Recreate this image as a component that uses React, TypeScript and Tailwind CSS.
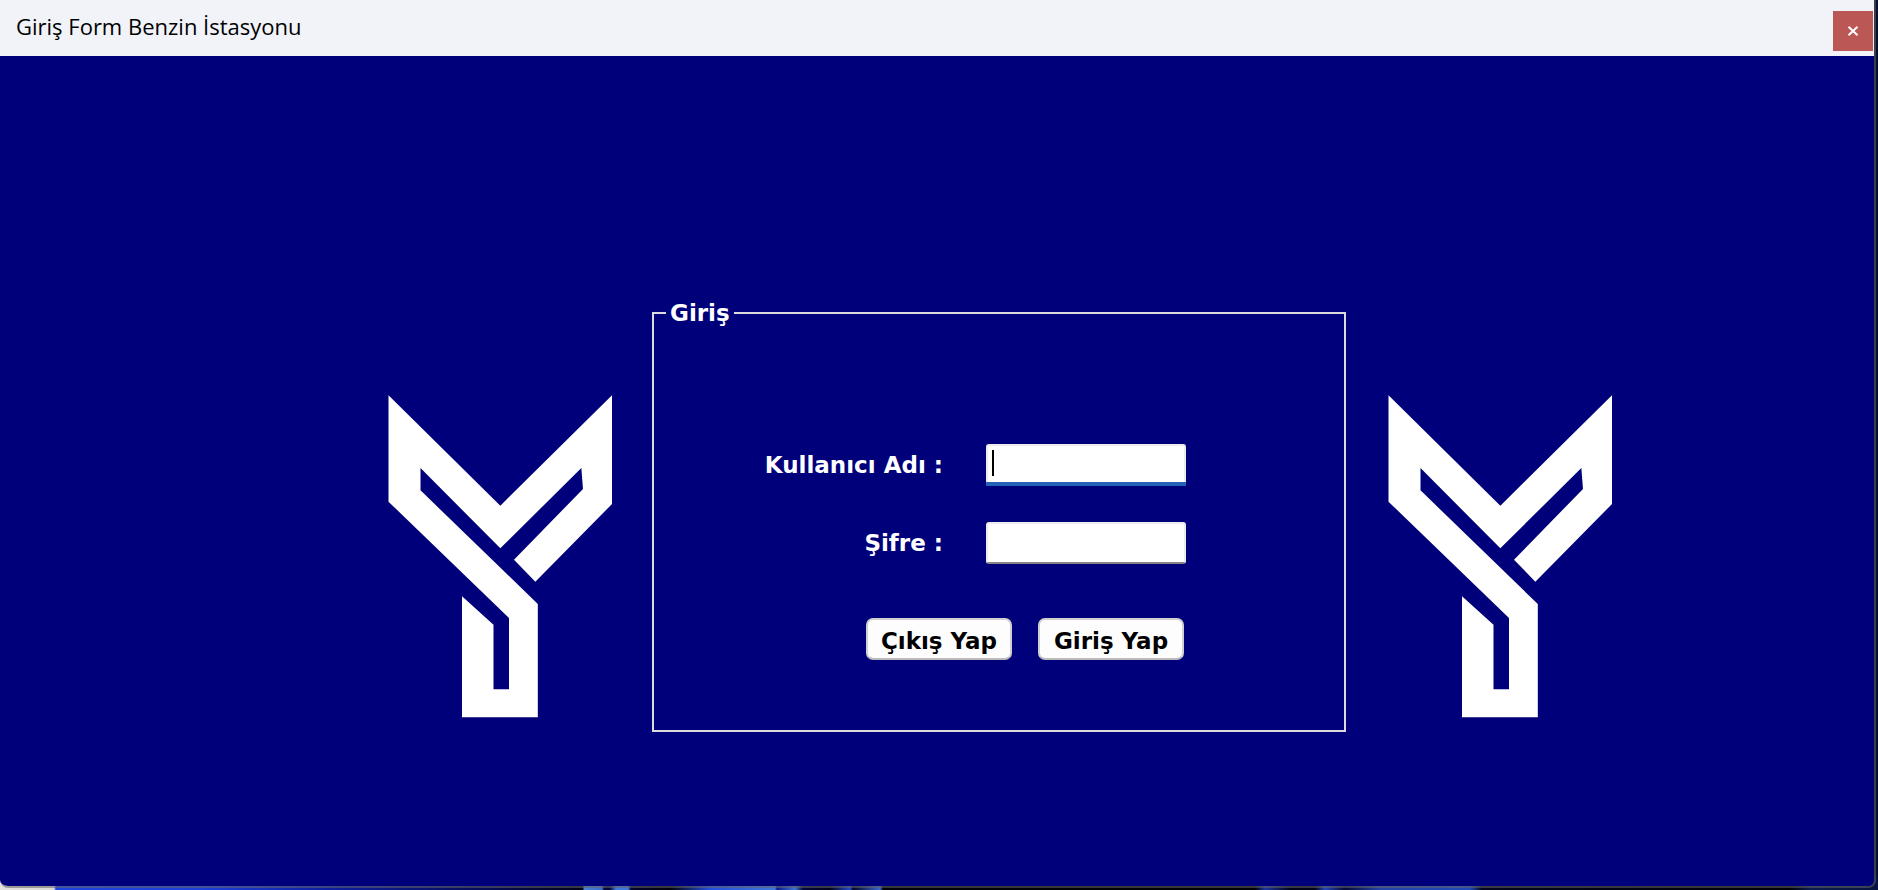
import type { ReactNode } from "react";

function YLogo() {
  return (
    <svg
      viewBox="54 45 672 969"
      className="mt-[94px] h-[323px] w-[224px] shrink-0 fill-white"
      role="img"
      aria-label="Logo"
    >
      <path d="M55.5 46 L391 377 L726 46 V372 L496 605 L432 539 L639 327 L634 264 L391 505 L151.5 264 V331 L503.4 672 V1011.5 H276 V649 L370.5 734 V928 H417 V714 L55.5 365 Z" />
    </svg>
  );
}

type FieldProps = { id: string; label: string; type: string; children?: ReactNode };

function Field({ id, label, type, children }: FieldProps) {
  return (
    <div className="flex items-center justify-end gap-[43px]">
      <label htmlFor={id} className="leading-6">
        {label}
      </label>
      <div className="relative h-[42px] w-[200px]">
        <input
          id={id}
          type={type}
          className="block size-full rounded-[3px] border-2 border-[#ececec] border-b-[#868686] bg-white px-1 text-black caret-transparent outline-none"
        />
        {children}
      </div>
    </div>
  );
}

function FormButton({ type, children }: { type: "button" | "submit"; children: ReactNode }) {
  return (
    <button
      type={type}
      className="h-[42px] w-[146px] rounded-[7px] border-2 border-[#d0d0d0] border-b-[#bababa] bg-[#fdfdfd] pt-1 text-center leading-6 whitespace-nowrap text-black"
    >
      {children}
    </button>
  );
}

export default function App() {
  return (
    <div className="flex min-h-screen flex-col bg-[#07102e] bg-[linear-gradient(90deg,#e4e2de_0px,#dcdad6_54px,#1d44e0_56px,#1d40dc_200px,#0d1ea0_330px,#050a50_500px,#020318_583px,#4a80d4_584px,#3a70cc_602px,#04083a_604px,#04083a_610px,#3f78d8_616px,#3f78d8_628px,#03052e_631px,#02020c_670px,#2450e0_710px,#3f78d8_775px,#0a1a90_777px,#3f74d0_795px,#04083a_803px,#02041c_830px,#2448c8_850px,#04062a_853px,#3a68cc_880px,#02020a_883px,#010108_1255px,#1c34a0_1265px,#02041c_1290px,#02041c_1315px,#2444b8_1325px,#050a38_1345px,#2444a8_1380px,#1f4ab8_1470px,#03061e_1482px,#010108_1790px,#0a1c50_1810px,#081440_100%)] bg-[length:100%_14px] bg-bottom bg-no-repeat pr-0.5 pb-0.5">
      <div className="flex grow flex-col overflow-hidden rounded-b-lg border-r-2 border-b-2 border-[#6464648c]">
        <header className="flex h-14 shrink-0 items-center justify-between bg-[#f1f3f9] pr-px pl-4">
          <h1 className="pb-1 font-['Open_Sans',sans-serif] text-[22px] leading-8 text-black">
            Giriş Form Benzin İstasyonu
          </h1>
          <button
            type="button"
            aria-label="Kapat"
            className="mt-1.5 flex size-10 items-center justify-center bg-[#bb5855]"
          >
            <svg viewBox="0 0 12 10" className="h-[10px] w-3" fill="none" stroke="white" strokeWidth="2">
              <path d="M1.5 0.8 L10.5 9.2 M10.5 0.8 L1.5 9.2" />
            </svg>
          </button>
        </header>

        <main className="flex grow items-start justify-center gap-10 bg-[#00007b] pt-[245px] pl-[126px] font-['DejaVu_Sans',Verdana,sans-serif] text-[23px] font-bold text-white">
          <YLogo />
          <form className="mr-0.5" onSubmit={(event) => event.preventDefault()}>
            <fieldset className="w-[694px] border-2 border-[#dcdcdc] pr-[158px] pb-[70px] pl-3">
              <legend className="px-1 leading-6">Giriş</legend>
              <div className="flex flex-col pt-[119px]">
                <div className="flex flex-col gap-9">
                  <Field id="username" label="Kullanıcı Adı :" type="text">
                    <span className="absolute inset-x-0 bottom-0 h-1 bg-[#2463b5]" />
                    <span className="absolute top-1.5 left-1.5 h-[26px] w-0.5 bg-black" />
                  </Field>
                  <Field id="password" label="Şifre :" type="password" />
                </div>
                <div className="mt-[54px] mr-0.5 flex justify-end gap-[26px]">
                  <FormButton type="button">Çıkış Yap</FormButton>
                  <FormButton type="submit">Giriş Yap</FormButton>
                </div>
              </div>
            </fieldset>
          </form>
          <YLogo />
        </main>
      </div>
    </div>
  );
}
